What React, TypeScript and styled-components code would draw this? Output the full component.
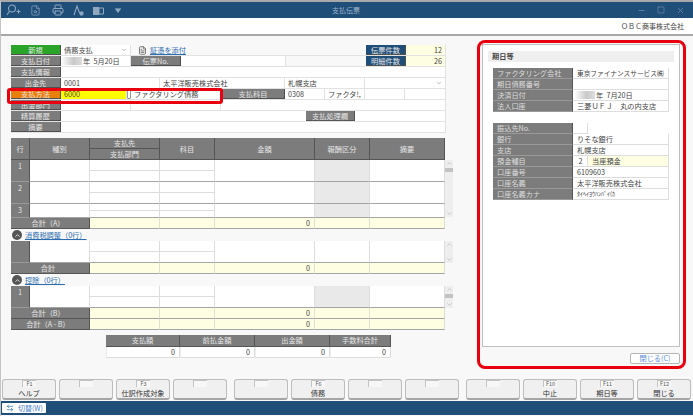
import React from "react";
import styled, { createGlobalStyle } from "styled-components";
import { FileSearch, Printer, Minus, Square, X, FileText, ChevronDown, ChevronUp, ArrowLeftRight } from "lucide-react";

const Global = createGlobalStyle`
  html, body { margin: 0; padding: 0; width: 693px; height: 416px; overflow: hidden; background: #fff; }
  body { font-family: "Noto Sans CJK JP", "Noto Sans", sans-serif; font-size: 7.2px; color: #333; }
  * { box-sizing: border-box; }
`;

const Win = styled.div`
  width: 693px; height: 416px; display: flex; flex-direction: column;
  border-top: 2px solid #a9a9a9; border-left: 1px solid #c4c4c4; background: #f8f8f8; position: relative;
`;
const TitleBar = styled.div`
  height: 16px; flex: none; background: #1f4e79; color: #9db4c9; display: flex; align-items: center; position: relative;
  padding-left: 5px;
`;
const ToolIcons = styled.div`display: flex; align-items: center; gap: 9px; color: #8fa8c0;`;
const TitleText = styled.div`position: absolute; left: 0; right: 0; text-align: center; font-size: 7px; padding-right: 2px;`;
const WinControls = styled.div`position: absolute; right: 8px; top: 4px; display: flex; gap: 11px; color: #6f8dab;`;
const CompanyBar = styled.div`
  height: 18px; flex: none; background: #fff; border-bottom: 2px solid #a8a8a8; text-align: right;
  padding: 3px 9px 0 0; font-size: 7px; color: #444; line-height: 11px;
`;
const Main = styled.div`flex: none; height: 343px; display: flex; padding: 9px 0 0 10px;`;
const LeftCol = styled.div`width: 466px; flex: none; position: relative;`;

const FormBox = styled.div`width: 435px; display: flex; flex-direction: column; background: #e2e2e2;`;
const FormRow = styled.div`display: flex; height: 11px; background: #fff; border-bottom: 1px solid #e2e2e2;`;
const Label = styled.div<{ $bg?: string; $w?: number }>`
  width: ${p => p.$w ?? 50}px; flex: none; background: ${p => p.$bg ?? "#7c7c7c"}; color: #e6e6e6; text-align: center;
  line-height: 10px; font-size: 7.2px; border-right: 1px solid #4f4f4f; border-bottom: 1px solid #4f4f4f;
`;
const Cell = styled.div<{ $w?: number; $bg?: string; $right?: boolean }>`
  ${p => (p.$w ? `width:${p.$w}px; flex:none;` : "flex:1;")}
  background: ${p => p.$bg ?? "#fff"}; padding: 0 3px; line-height: 10px; font-size: 7.2px; color: #444;
  border-right: 1px solid #e2e2e2; white-space: nowrap; overflow: hidden; display: flex; align-items: center;
  ${p => (p.$right ? "justify-content:flex-end;" : "")}
`;
const BlurDate = styled.span`
  width: 21px; height: 8px; flex: none; margin-left: -3px; margin-right: 1px;
  background: linear-gradient(90deg, #fff, #c9c9c9 60%, #ddd);
`;
const Caret = styled(ChevronDown)`margin-left: auto; color: #777; flex: none;`;
const DocLink = styled.a`display: flex; align-items: center; gap: 3px; padding-left: 7px; color: #2b6cb0; text-decoration: underline; font-size: 7.2px; width: 235px; background: #f8f8f8; flex: none; line-height: 10px;`;
const Handle = styled.span`width: 4px; height: 10px; flex: none; background: #fff; border: 1px solid #999; border-radius: 1px;`;
const SmallBtn = styled.div`
  width: 49px; height: 10px; flex: none; margin-left: 245px; background: #7c7c7c; color: #e6e6e6; text-align: center; line-height: 10px; font-size: 7.2px;
  border-right: 1px solid #555; border-bottom: 1px solid #555;
`;
const Gap = styled.div`flex: none; width: 80px; background: #f8f8f8;`;

const cols = "19px 60px 70px 55px 100px 55px 75px";
const TableWrap = styled.div<{ $mt?: number }>`display: flex; width: 444px; margin-top: ${p => p.$mt ?? 0}px;`;
const GridBody = styled.div`width: 434px; flex: none;`;
const Grid = styled.div<{ $h: number }>`
  display: grid; grid-template-columns: ${cols}; height: ${p => p.$h}px; overflow: hidden;
`;
const HeadCell = styled.div`
  background: #7c7c7c; color: #e6e6e6; display: flex; align-items: center; justify-content: center; font-size: 7.2px;
  border-right: 1px solid #555; border-bottom: 1px solid #555;
`;
const StackHead = styled.div`display: grid; grid-template-rows: 1fr 1fr;`;
const RowNo = styled.div`
  background: #7c7c7c; color: #e6e6e6; text-align: center; font-size: 7.2px; padding-top: 1px; line-height: 10px;
  border-right: 1px solid #555; border-bottom: 1px solid #999;
`;
const DataCell = styled.div<{ $grey?: boolean }>`
  background: ${p => (p.$grey ? "#e9e9e9" : "#fff")}; border-right: 1px solid #ddd; border-bottom: 1px solid #a5a5a5;
`;
const Stack = styled.div`
  display: grid; grid-template-rows: 1fr 1fr; border-right: 1px solid #ddd; border-bottom: 1px solid #a5a5a5; background: #fff;
  & > div:first-child { border-bottom: 1px solid #ddd; }
`;
const TotalRow = styled.div`display: grid; grid-template-columns: 79px 70px 55px 100px 55px 75px; height: 11px;`;
const TotalLabel = styled.div`
  background: #7c7c7c; color: #e6e6e6; text-align: center; line-height: 10px; font-size: 7.2px;
  border-right: 1px solid #555; border-bottom: 1px solid #555; padding-right: 4px;
`;
const TotalCell = styled.div`
  background: #fefee2; border-right: 1px solid #e0e0d0; border-bottom: 1px solid #a5a5a5; text-align: right; padding-right: 4px;
  line-height: 10px; font-size: 7.2px; color: #444;
`;
const ScrollTrack = styled.div<{ $h: number; $mt: number }>`
  width: 8px; height: ${p => p.$h}px; margin-top: ${p => p.$mt}px; flex: none; background: #eeeeee; color: #aaa;
  display: flex; flex-direction: column; align-items: center; justify-content: space-between; position: relative;
`;
const Thumb = styled.div`position: absolute; top: 8px; left: 0; width: 8px; height: 4px; background: #c2c2c2;`;
const SectionHead = styled.div`
  height: 12px; display: flex; align-items: center; gap: 3px; padding-left: 1px; color: #2b6cb0; font-size: 7.2px; line-height: 10px;
  & > span { text-decoration: underline; }
`;
const Toggle = styled.span`
  width: 10px; height: 10px; border-radius: 50%; background: #555; display: flex; align-items: center; justify-content: center; color: #eee; flex: none;
`;
const Summary = styled.div`
  margin: 5px 0 0 95px; display: grid; grid-template-columns: 74px 75px 75px 61px; width: 285px;
`;
const SumHead = styled.div`
  height: 12px; background: #7c7c7c; color: #e6e6e6; text-align: center; line-height: 11px; font-size: 7.2px; border-right: 1px solid #555; border-bottom: 1px solid #555;
`;
const SumVal = styled.div`
  height: 11px; background: #fff; text-align: right; padding-right: 4px; line-height: 10px; font-size: 7.2px; color: #444;
  border-right: 1px solid #ddd; border-bottom: 1px solid #ddd; border-left: 1px solid #eee;
`;

const RightCol = styled.div`width: 206px; flex: none; padding-left: 8px; margin-left: -3px; margin-top: -1px;`;
const Panel = styled.div`
  width: 198px; height: 303px; background: #fff; border: 1px solid #c0c0c0; padding: 6px 5px 0;
`;
const PanelHead = styled.div`height: 11px; background: #efefef; font-size: 7.2px; font-weight: 700; padding-left: 4px; line-height: 11px; color: #444; margin-bottom: 6px;`;
const PanelGroup = styled.div<{ $mb?: number }>`margin: 0 0 ${p => p.$mb ?? 0}px 5px; width: 176px;`;
const PRow = styled.div`display: flex; height: 11px; background: #fff;`;
const PLabel = styled.div`
  width: 80px; flex: none; background: #7c7c7c; color: #ddd; padding-left: 4px; line-height: 10px; font-size: 7.2px;
  border-right: 1px solid #555; border-bottom: 1px solid #999;
`;
const PVal = styled.div<{ $w?: number; $bg?: string; $small?: boolean; $tight?: boolean }>`
  ${p => (p.$w ? `width:${p.$w}px; flex:none;` : "flex:1;")} background: ${p => p.$bg ?? "#fff"};
  padding-left: 4px; line-height: 10px; font-size: ${p => (p.$small ? 6 : p.$tight ? 6.7 : 7.2)}px; color: #444; white-space: nowrap; overflow: hidden;
  border-right: 1px solid #ddd; border-bottom: 1px solid #ddd; display: flex; align-items: center;
`;
const CloseRow = styled.div`display: flex; justify-content: flex-end; padding: 6px 0 0; width: 198px;`;
const CloseBtn = styled.div`
  width: 50px; height: 11px; background: #fff; border: 1px solid #b5b5b5; border-radius: 2px; color: #5b8fd8; text-align: center; line-height: 9px; font-size: 7.2px;
`;

const FnBar = styled.div`flex: none; height: 21px; display: flex; padding-left: 1px;`;
const FnGroup = styled.div`display: flex; gap: 3px; margin-right: 7px;`;
const FnKey = styled.div`
  width: 54px; height: 21px; background: #f0f0f0; border: 1px solid #bdbdbd; border-bottom: 2px solid #a5a5a5; border-radius: 3px;
  display: flex; flex-direction: column; align-items: center; color: #333; font-size: 7.2px; line-height: 9px;
`;
const FnTag = styled.div`
  width: 14px; height: 7px; font-size: 5.5px; line-height: 7px; text-align: center; color: #555; background: #f7f7f7;
  border-top: 1px solid #c4c4c4; border-left: 1px solid #c4c4c4; margin-bottom: 2px; overflow: hidden;
`;
const BottomBar = styled.div`
  flex: none; height: 14px; margin-top: 1px; background: #1f4e79; display: flex; align-items: center; padding-left: 1px;
`;
const SwitchBtn = styled.div`
  width: 44px; height: 10px; background: #fff; border-radius: 1px; color: #4a80d0; font-size: 7px; line-height: 10px; display: flex; align-items: center; gap: 4px; padding-left: 4px;
  & > span { white-space: nowrap; }
`;
const RedFrame = styled.div<{ $l: number; $t: number; $w: number; $h: number; $r: number }>`
  position: absolute; left: ${p => p.$l}px; top: ${p => p.$t}px; width: ${p => p.$w}px; height: ${p => p.$h}px;
  border: 3px solid #e8000f; border-radius: ${p => p.$r}px; pointer-events: none;
`;

const keys: [string, string][][] = [
  [["F1", "ヘルプ"], ["", ""], ["F3", "仕訳作成対象"], ["", ""]],
  [["", ""], ["F6", "債務"], ["", ""], ["", ""]],
  [["", ""], ["F10", "中止"], ["F11", "期日等"], ["F12", "閉じる"]],
];

const Row = ({ n, grey = false }: { n?: string; grey?: boolean }) => (
  <>
    <RowNo>{n}</RowNo>
    <DataCell />
    <Stack><div /><div /></Stack>
    <Stack><div /><div /></Stack>
    <DataCell />
    <DataCell $grey={grey} />
    <DataCell />
  </>
);
const Total = ({ label, val = "0" }: { label: string; val?: string }) => (
  <TotalRow>
    <TotalLabel>{label}</TotalLabel>
    <TotalCell /><TotalCell />
    <TotalCell>{val}</TotalCell>
    <TotalCell /><TotalCell />
  </TotalRow>
);
const Scroll = ({ h, mt, thumb = true }: { h: number; mt: number; thumb?: boolean }) => (
  <ScrollTrack $h={h} $mt={mt}>
    <ChevronUp size={7} />
    {thumb && <Thumb />}
    <ChevronDown size={7} />
  </ScrollTrack>
);

export default function App() {
  return (
    <Win>
      <Global />
      <TitleBar>
        <TitleText>支払伝票</TitleText>
        <ToolIcons>
          <svg width="15" height="12" viewBox="0 0 15 12" fill="none" stroke="currentColor" strokeWidth="1.1"><circle cx="6" cy="4.5" r="3.5" /><path d="M3.5 7 1 11" /><path d="M10.5 7.5h4M12.5 5.5v4" /></svg>
          <FileSearch size={11} strokeWidth={1.5} />
          <Printer size={12} strokeWidth={2} style={{ marginLeft: 2 }} />
          <svg width="11" height="11" viewBox="0 0 11 11" fill="none" stroke="currentColor" strokeWidth="1.1"><path d="M1 10 4 1l2.5 7" /><circle cx="8.5" cy="8.5" r="1.6" fill="currentColor" /></svg>
          <svg width="11" height="11" viewBox="0 0 11 11" fill="currentColor"><path d="M0 2h6v8H0z" /><path d="M6 3h4.5v6H6z" fill="none" stroke="currentColor" /></svg>
          <svg width="6" height="5" viewBox="0 0 6 5" fill="currentColor" style={{ marginLeft: 2 }}><path d="M0 1h6L3 5z" /><path d="M0 0h6v.6H0z" /></svg>
        </ToolIcons>
        <WinControls>
          <Minus size={9} /><Square size={8} /><X size={9} />
        </WinControls>
      </TitleBar>
      <CompanyBar>ＯＢＣ商事株式会社</CompanyBar>
      <Main>
        <LeftCol>
          <FormBox>
            <FormRow>
              <Label $bg="#2aa52a">新規</Label>
              <Cell $w={70}>債務支払<Caret size={6} /></Cell>
              <DocLink><FileText size={9} color="#555" />証憑を添付</DocLink>
              <Label $bg="#1f4e79" $w={40}>伝票件数</Label>
              <Cell $bg="#fefee2" $right>12</Cell>
            </FormRow>
            <FormRow>
              <Label>支払日付</Label>
              <Cell $w={70}><BlurDate />年&nbsp;&nbsp;5月20日</Cell>
              <Label $w={50}>伝票No.</Label>
              <Cell $w={105} />
              <Gap />
              <Label $bg="#1f4e79" $w={40}>明細件数</Label>
              <Cell $bg="#fefee2" $right>26</Cell>
            </FormRow>
            <FormRow><Label>支払情報</Label><Cell /></FormRow>
            <FormRow>
              <Label>出金先</Label>
              <Cell $w={99}>0001</Cell>
              <Cell $w={125}>太平洋販売株式会社</Cell>
              <Cell $w={80}>札幌支店</Cell>
              <Cell><Caret size={6} /></Cell>
            </FormRow>
            <FormRow>
              <Label $bg="#e97f0d">支払方法</Label>
              <Cell $w={66} $bg="#ffff00">6000</Cell>
              <Handle />
              <Cell $w={91}>ファクタリング債務</Cell>
              <Label $w={63}>支払科目</Label>
              <Cell $w={40}>0308</Cell>
              <Cell $w={40}>ファクタ!,</Cell>
              <Cell $w={40} />
              <Cell />
            </FormRow>
            <FormRow>
              <Label>出金部門</Label>
              <Cell $w={70} /><Cell $w={90} /><Cell />
            </FormRow>
            <FormRow>
              <Label>精算履歴</Label>
              <SmallBtn>支払処理欄</SmallBtn>
              <Cell />
            </FormRow>
            <FormRow><Label>摘要</Label><Cell /></FormRow>
          </FormBox>

          <TableWrap $mt={5}>
            <GridBody>
              <Grid $h={22}>
                <HeadCell>行</HeadCell>
                <HeadCell>種別</HeadCell>
                <StackHead><HeadCell>支払先</HeadCell><HeadCell>支払部門</HeadCell></StackHead>
                <HeadCell>科目</HeadCell>
                <HeadCell>金額</HeadCell>
                <HeadCell>報酬区分</HeadCell>
                <HeadCell>摘要</HeadCell>
              </Grid>
              <Grid $h={22}><Row n="1" grey /></Grid>
              <Grid $h={22}><Row n="2" grey /></Grid>
              <Grid $h={14}><Row n="3" grey /></Grid>
              <Total label="合計（A）" />
            </GridBody>
            <Scroll h={57} mt={22} />
          </TableWrap>

          <SectionHead><Toggle><ChevronUp size={7} strokeWidth={3} /></Toggle><span>消費税調整（0行）</span></SectionHead>
          <TableWrap>
            <GridBody>
              <Grid $h={22}><Row /></Grid>
              <Total label="合計" />
            </GridBody>
            <Scroll h={22} mt={0} thumb={false} />
          </TableWrap>

          <SectionHead><Toggle><ChevronUp size={7} strokeWidth={3} /></Toggle><span>控除（0行）</span></SectionHead>
          <TableWrap>
            <GridBody>
              <Grid $h={22}><Row n="1" grey /></Grid>
              <Total label="合計（B）" />
              <Total label="合計（A - B）" />
            </GridBody>
            <Scroll h={22} mt={0} />
          </TableWrap>

          <Summary>
            <SumHead>支払額</SumHead><SumHead>前払金額</SumHead><SumHead>出金額</SumHead><SumHead>手数料合計</SumHead>
            <SumVal>0</SumVal><SumVal>0</SumVal><SumVal>0</SumVal><SumVal>0</SumVal>
          </Summary>
          <RedFrame $l={-4} $t={43} $w={216} $h={16} $r={3} />
        </LeftCol>

        <RightCol>
          <Panel>
            <PanelHead>期日等</PanelHead>
            <PanelGroup $mb={11}>
              <PRow><PLabel>ファクタリング会社</PLabel><PVal $tight>東京ファイナンスサービス㈱</PVal></PRow>
              <PRow><PLabel>期日債務番号</PLabel><PVal /></PRow>
              <PRow><PLabel>決済日付</PLabel><PVal><BlurDate />年&nbsp;&nbsp;7月20日</PVal></PRow>
              <PRow><PLabel>法人口座</PLabel><PVal>三菱ＵＦＪ　丸の内支店</PVal></PRow>
            </PanelGroup>
            <PanelGroup>
              <PRow><PLabel>振込先No.</PLabel><PVal $w={15} /></PRow>
              <PRow><PLabel>銀行</PLabel><PVal>りそな銀行</PVal></PRow>
              <PRow><PLabel>支店</PLabel><PVal>札幌支店</PVal></PRow>
              <PRow><PLabel>預金種目</PLabel><PVal $w={15}>&nbsp;2</PVal><PVal $bg="#fefee2">当座預金</PVal></PRow>
              <PRow><PLabel>口座番号</PLabel><PVal>6109603</PVal></PRow>
              <PRow><PLabel>口座名義</PLabel><PVal>太平洋販売株式会社</PVal></PRow>
              <PRow><PLabel>口座名義カナ</PLabel><PVal $small>ﾀｲﾍｲﾖｳﾊﾝﾊﾞｲ(ｶ</PVal></PRow>
            </PanelGroup>
          </Panel>
          <CloseRow><CloseBtn>閉じる(C)</CloseBtn></CloseRow>
          <RedFrame $l={476} $t={38} $w={209} $h={329} $r={8} />
        </RightCol>
      </Main>
      <FnBar>
        {keys.map((g, i) => (
          <FnGroup key={i}>
            {g.map(([f, l], j) => (
              <FnKey key={j}><FnTag>{f}</FnTag>{l}</FnKey>
            ))}
          </FnGroup>
        ))}
      </FnBar>
      <BottomBar>
        <SwitchBtn><ArrowLeftRight size={8} color="#2b6cb0" /><span>切替(W)</span></SwitchBtn>
      </BottomBar>
    </Win>
  );
}
